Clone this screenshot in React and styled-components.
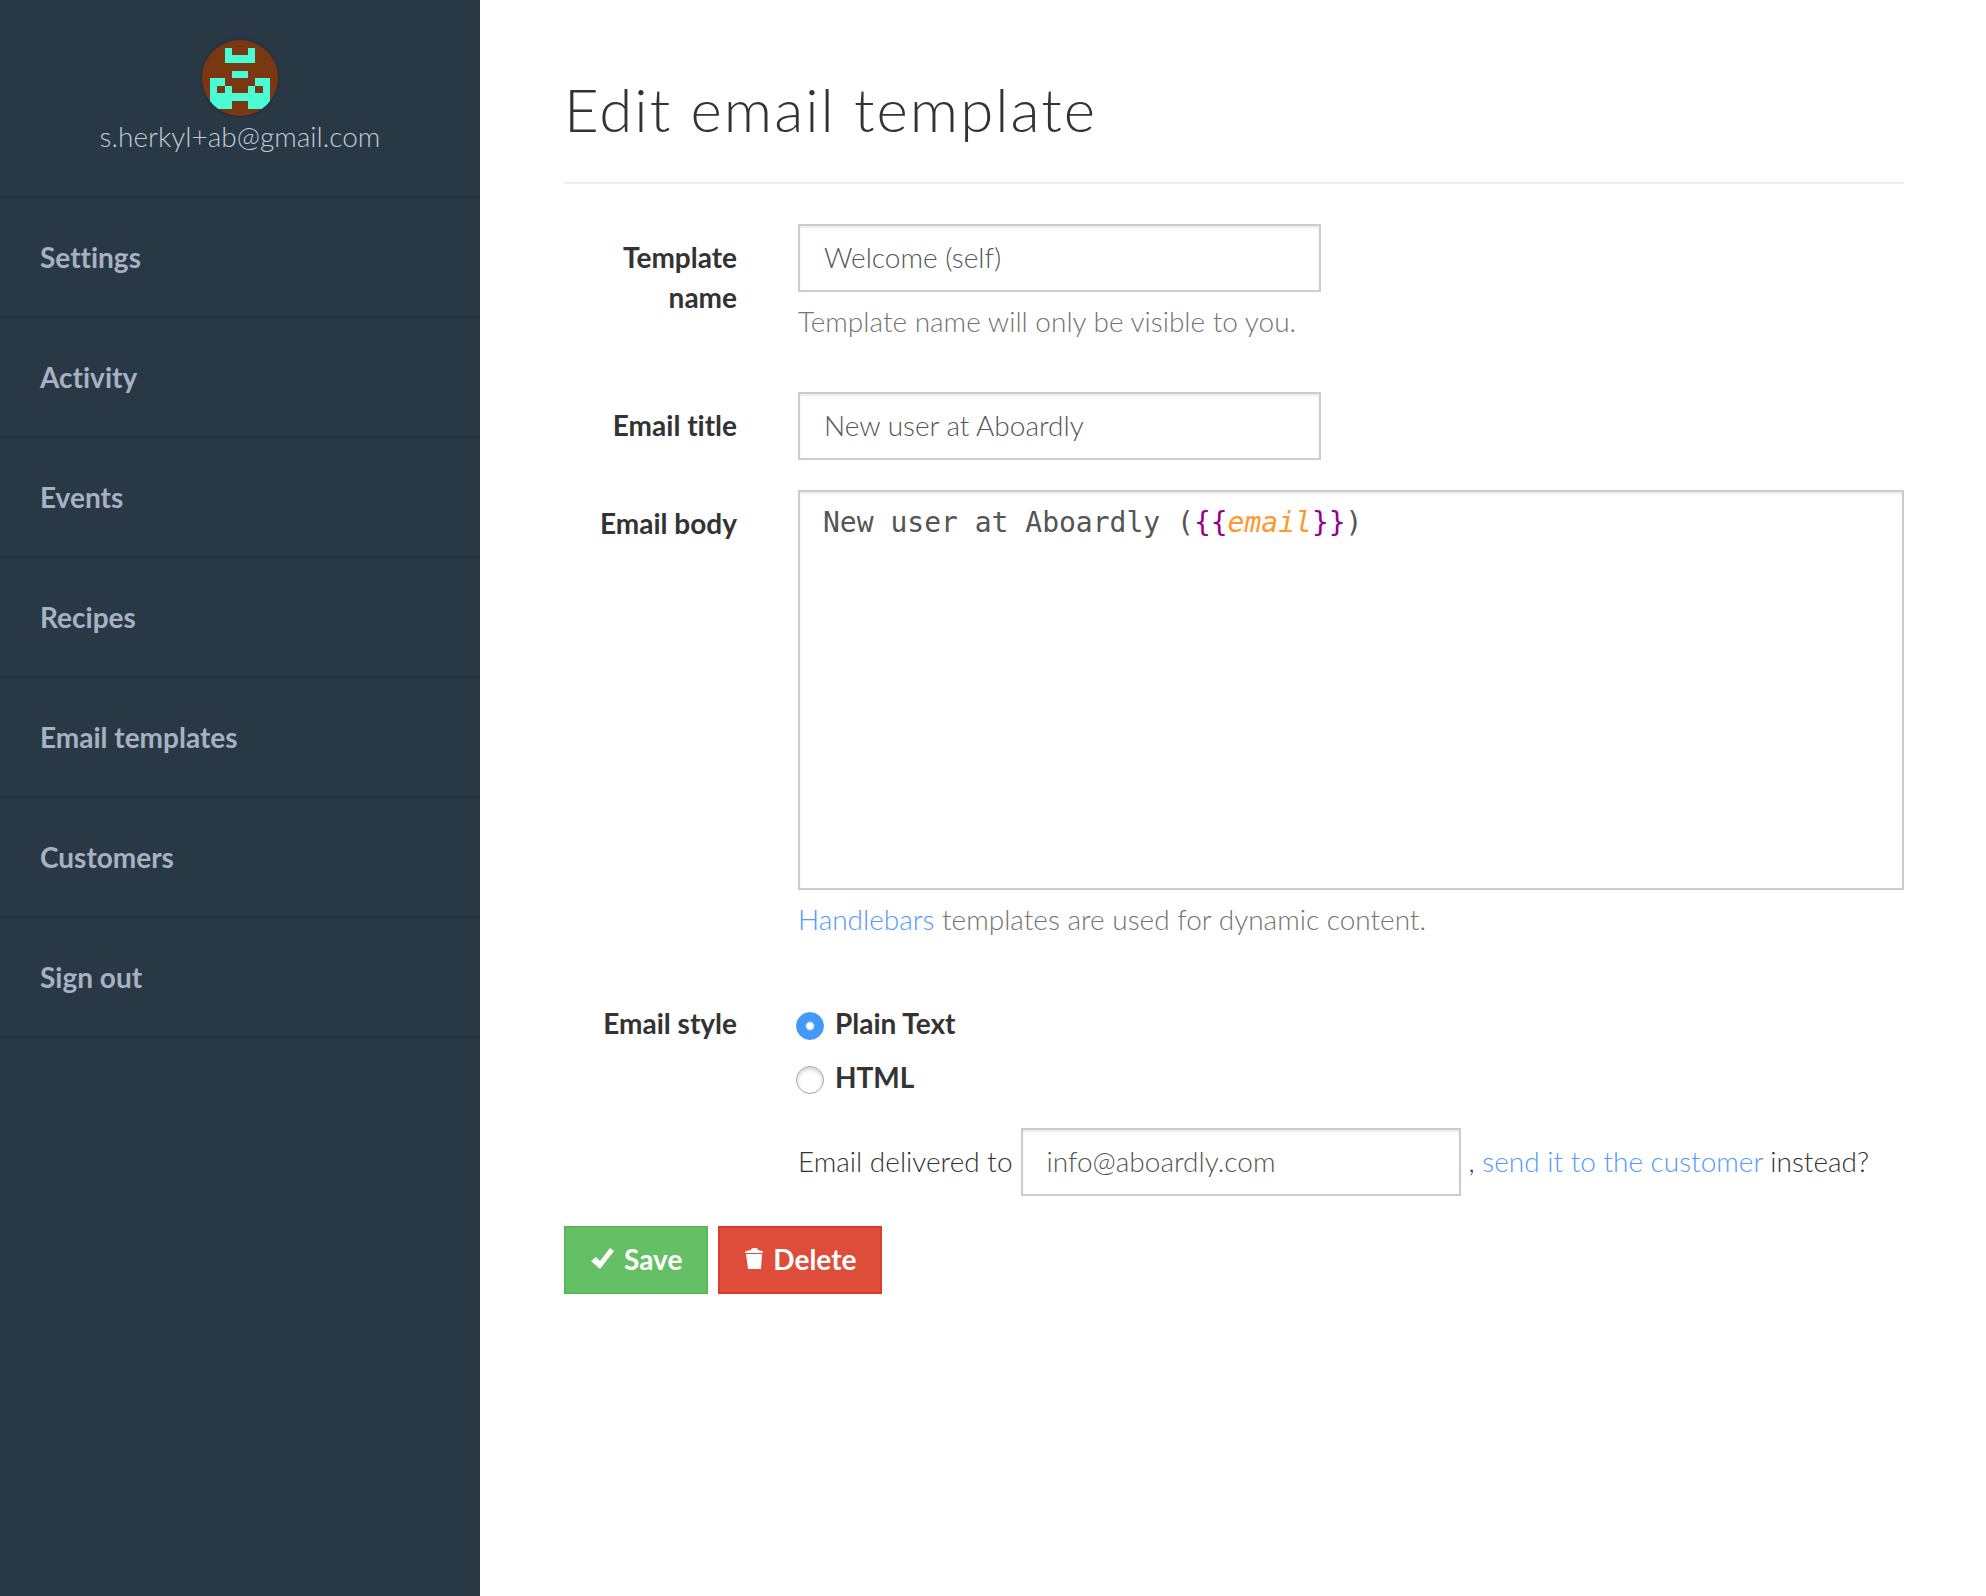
import React, { useState } from "react";
import styled, { createGlobalStyle, css } from "styled-components";

const GlobalStyle = createGlobalStyle`
  *,
  *::before,
  *::after {
    box-sizing: border-box;
  }

  body {
    margin: 0;
    background: #fff;
    color: #333;
    font-family: Lato, "Liberation Sans", sans-serif;
    font-size: 28px;
    font-variant-ligatures: none;
    font-weight: 300;
    line-height: 40px;
  }
`;

const Layout = styled.div`
  display: flex;
  min-height: 100vh;
`;

const Sidebar = styled.aside`
  flex: 0 0 480px;
  background: #293845;
`;

const Profile = styled.div`
  display: flex;
  flex-direction: column;
  align-items: center;
  height: 198px;
  padding-top: 40px;
  border-bottom: 2px solid #24323e;
  color: #c5cad8;
`;

const Avatar = styled.svg`
  display: block;
  width: 76px;
  height: 76px;
  border-radius: 50%;
  box-shadow: 0 0 2px 1px rgba(30, 40, 52, 0.6);
`;

const NavLink = styled.a`
  display: block;
  padding: 39px 40px;
  border-bottom: 2px solid #24323e;
  color: #a8b1c3;
  font-weight: 700;
  text-decoration: none;

  &:hover {
    background: #24323e;
  }
`;

const Main = styled.main`
  flex: 1;
  min-width: 0;
  padding: 76px 82px 80px 84px;
`;

const Title = styled.h1`
  margin: 0 0 40px;
  padding-bottom: 40px;
  border-bottom: 2px solid #eee;
  font-size: 60px;
  font-weight: 300;
  line-height: 66px;
  letter-spacing: 2px;
`;

const Group = styled.div`
  display: grid;
  grid-template-columns: 174px minmax(0, 1fr);
  column-gap: 60px;
  margin-bottom: 30px;
`;

const labelText = css`
  font-weight: 700;
`;

const Label = styled.label`
  ${labelText}
  padding: 13px 1px 0 0;
  text-align: right;
`;

const field = css`
  border: 2px solid #ccc;
  border-radius: 0;
  background: #fff;
  box-shadow: inset 0 2px 2px rgba(0, 0, 0, 0.075);
  color: #555;

  &:focus-within,
  &:focus {
    outline: none;
    border-color: #66afe9;
  }
`;

const Input = styled.input`
  ${field}
  width: ${(props) => props.$width};
  height: 68px;
  padding: 11px 24px 13px;
  font: inherit;
`;

const Help = styled.p`
  margin: 9px 0 21px;
  color: #737373;
`;

const Link = styled.a`
  color: #5499ff;
  text-decoration: none;

  &:hover {
    text-decoration: underline;
  }
`;

const Editor = styled.div`
  ${field}
  display: grid;
  height: 400px;
`;

const editorText = css`
  grid-area: 1 / 1;
  margin: 0;
  padding: 11px 23px;
  font-family: "DejaVu Sans Mono", monospace;
  font-size: 28px;
  font-weight: 400;
  line-height: 40px;
  white-space: pre-wrap;
`;

const Highlight = styled.pre`
  ${editorText}
`;

const Source = styled.textarea`
  ${editorText}
  border: 0;
  outline: none;
  resize: none;
  background: transparent;
  color: transparent;
  caret-color: #333;
`;

const Brace = styled.span`
  color: #908;
`;

const Variable = styled.span`
  color: #ff982d;
  font-style: italic;
`;

const Options = styled.div`
  display: flex;
  flex-direction: column;
  gap: 14px;
  padding-top: 13px;
`;

const Option = styled.label`
  ${labelText}
  display: flex;
  align-items: center;
  gap: 11px;
`;

const Radio = styled.input`
  appearance: none;
  width: 28px;
  height: 28px;
  margin: 6px 0 0 -2px;
  border: 1px solid #a8a8a8;
  border-radius: 50%;
  background: #fff;
  box-shadow: inset 0 2px 4px rgba(0, 0, 0, 0.2);

  &:checked {
    border-color: #4199fa;
    background: radial-gradient(circle, #fff 0 3px, #4199fa 5px);
    box-shadow: none;
  }
`;

const Delivery = styled.div`
  display: flex;
  grid-column: 2;
  align-items: center;
  gap: 8px;
  margin-top: 1px;
`;

const DeliveryText = styled.span`
  padding-bottom: 2px;
`;

const Actions = styled.div`
  display: flex;
  gap: 10px;
`;

const variants = {
  success: { background: "#65c065", border: "#58b957" },
  danger: { background: "#dd4d3a", border: "#db3d2c" },
};

const Button = styled.button`
  display: flex;
  align-items: center;
  gap: 9px;
  height: 68px;
  padding: 0 24px 2px;
  border: 2px solid ${(props) => variants[props.$variant].border};
  background: ${(props) => variants[props.$variant].background};
  color: #fff;
  font: inherit;
  font-weight: 700;
  cursor: pointer;
`;

const Icon = styled.svg`
  display: block;
  height: 24px;
  fill: currentColor;
`;

const navItems = [
  "Settings",
  "Activity",
  "Events",
  "Recipes",
  "Email templates",
  "Customers",
  "Sign out",
];

function Identicon() {
  return (
    <Avatar viewBox="0 0 76 76" aria-hidden="true">
      <rect width="76" height="76" fill="#7a3812" />
      <path
        fill="#4bfbd4"
        fillRule="evenodd"
        d="M23 8h7v7h16v-7h7v15H23z M30 31h16v7H30z M8 38h15v8h7v7h16v-7h7v-8h15v31H46v-8H30v8H8z M15 46h8v7h-8z M53 46h8v7h-8z"
      />
    </Avatar>
  );
}

// Wraps each {{variable}} so that it can be coloured.
function highlight(source) {
  return source.split(/(\{\{.*?\}\})/).map((part, index) => {
    if (!/^\{\{.*\}\}$/.test(part)) return part;
    return (
      <React.Fragment key={index}>
        <Brace>{"{{"}</Brace>
        <Variable>{part.slice(2, -2)}</Variable>
        <Brace>{"}}"}</Brace>
      </React.Fragment>
    );
  });
}

export default function App() {
  const [name, setName] = useState("Welcome (self)");
  const [title, setTitle] = useState("New user at Aboardly");
  const [body, setBody] = useState("New user at Aboardly ({{email}})");
  const [style, setStyle] = useState("text");
  const [recipient, setRecipient] = useState("info@aboardly.com");

  return (
    <>
      <GlobalStyle />
      <Layout>
        <Sidebar>
          <Profile>
            <Identicon />
            <span>s.herkyl+ab@gmail.com</span>
          </Profile>
          <nav>
            {navItems.map((item) => (
              <NavLink key={item} href="#">
                {item}
              </NavLink>
            ))}
          </nav>
        </Sidebar>
        <Main>
          <Title>Edit email template</Title>
          <form onSubmit={(event) => event.preventDefault()}>
            <Group>
              <Label htmlFor="name">Template name</Label>
              <div>
                <Input
                  id="name"
                  $width="calc(50% - 30px)"
                  value={name}
                  onChange={(event) => setName(event.target.value)}
                />
                <Help>Template name will only be visible to you.</Help>
              </div>
            </Group>
            <Group>
              <Label htmlFor="title">Email title</Label>
              <Input
                id="title"
                $width="calc(50% - 30px)"
                value={title}
                onChange={(event) => setTitle(event.target.value)}
              />
            </Group>
            <Group>
              <Label htmlFor="body">Email body</Label>
              <div>
                <Editor>
                  <Highlight aria-hidden="true">{highlight(body)}</Highlight>
                  <Source
                    id="body"
                    spellCheck={false}
                    value={body}
                    onChange={(event) => setBody(event.target.value)}
                  />
                </Editor>
                <Help>
                  <Link href="#">Handlebars</Link> templates are used for dynamic
                  content.
                </Help>
              </div>
            </Group>
            <Group>
              <Label as="div" id="style-label">
                Email style
              </Label>
              <Options role="radiogroup" aria-labelledby="style-label">
                <Option>
                  <Radio
                    type="radio"
                    name="style"
                    checked={style === "text"}
                    onChange={() => setStyle("text")}
                  />
                  Plain Text
                </Option>
                <Option>
                  <Radio
                    type="radio"
                    name="style"
                    checked={style === "html"}
                    onChange={() => setStyle("html")}
                  />
                  HTML
                </Option>
              </Options>
            </Group>
            <Group>
              <Delivery>
                <DeliveryText as="label" htmlFor="recipient">
                  Email delivered to
                </DeliveryText>
                <Input
                  id="recipient"
                  $width="440px"
                  value={recipient}
                  onChange={(event) => setRecipient(event.target.value)}
                />
                <DeliveryText>
                  , <Link href="#">send it to the customer</Link> instead?
                </DeliveryText>
              </Delivery>
            </Group>
            <Actions>
              <Button type="submit" $variant="success">
                <Icon viewBox="0 0 25 24" aria-hidden="true">
                  <path d="M1 14l5-4 4 4L20 1l4 3-14 18z" />
                </Icon>
                Save
              </Button>
              <Button type="button" $variant="danger">
                <Icon viewBox="0 0 20 24" aria-hidden="true">
                  <path d="M1 5q0-1 6-2 0-2 2-2h3q2 0 2 2 5 1 5 2v1H1z M2 7h16l-1 15H4z" />
                </Icon>
                Delete
              </Button>
            </Actions>
          </form>
        </Main>
      </Layout>
    </>
  );
}
